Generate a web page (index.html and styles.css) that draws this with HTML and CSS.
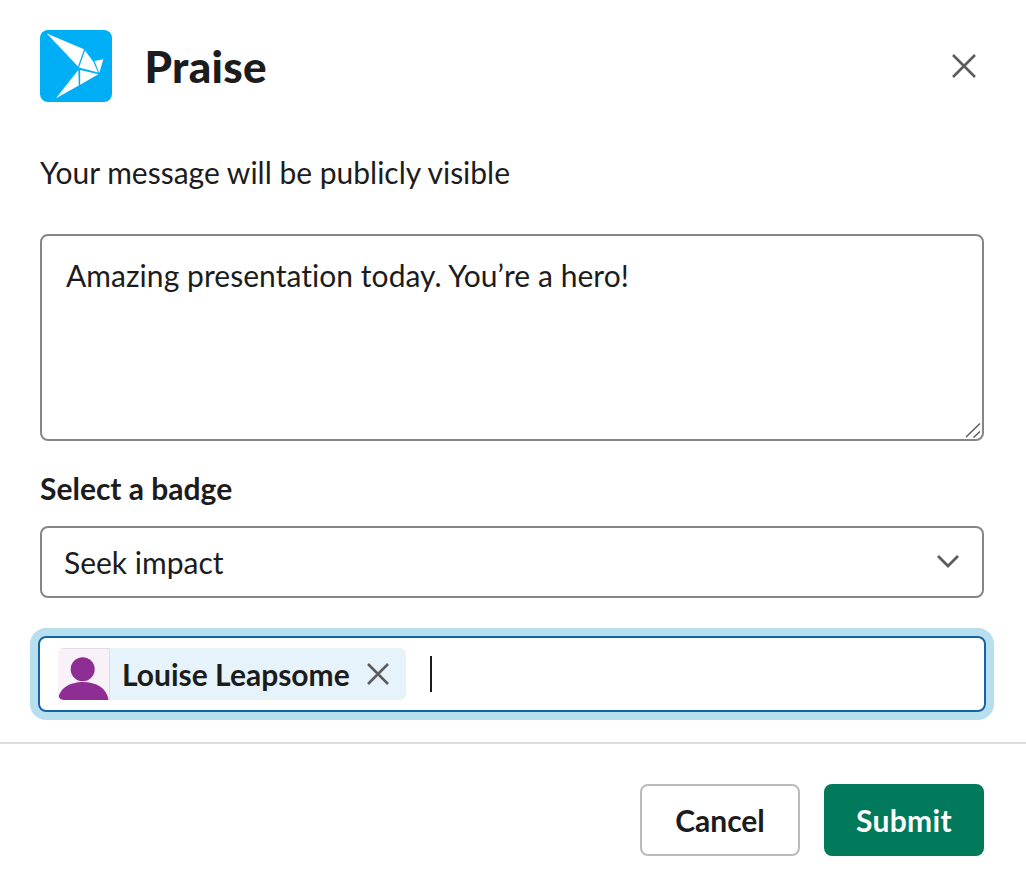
FILE: index.html
```html
<!DOCTYPE html>
<html lang="en">
<head>
<meta charset="utf-8">
<title>Praise</title>
<link rel="stylesheet" href="styles.css">
</head>
<body>
<div class="modal">
  <header class="header">
    <svg class="logo" viewBox="0 0 72 72" aria-hidden="true">
      <rect width="72" height="72" rx="8" fill="#00aef5"/>
      <path fill="#fff" d="M6.800 3.400 L44 19.300 L38 36.500 Z"/>
      <path fill="#fff" d="M45 20.500 L53.500 32 L58 42.500 L39 37.500 Z"/>
      <path fill="#fff" d="M54.500 31 L63.300 29.300 L59.300 43 Z"/>
      <path fill="#fff" d="M38.300 40 L38.800 55.500 L16 68.300 Z"/>
      <path fill="#fff" d="M40.200 40 L58.300 44.300 L40.200 54.800 Z"/>
    </svg>
    <h1 class="title">Praise</h1>
    <svg class="close" viewBox="0 0 28 28" aria-hidden="true">
      <path d="M3 3 L25 25 M25 3 L3 25" fill="none" stroke="#5c5c5c" stroke-width="2.600"/>
    </svg>
  </header>
  <p class="notice">Your message will be publicly visible</p>
  <div class="message-wrap">
    <textarea class="message">Amazing presentation today. You’re a hero!</textarea>
    <svg class="grip" viewBox="0 0 16 16" aria-hidden="true">
      <path d="M1 15 L15 1.500 M8.500 15.500 L15 9.500" fill="none" stroke="#5c5c5c" stroke-width="1.500"/>
    </svg>
  </div>
  <label class="label">Select a badge</label>
  <div class="select">
    <span>Seek impact</span>
    <svg class="chevron" viewBox="0 0 24 14" aria-hidden="true">
      <path d="M2 2 L12 12 L22 2" fill="none" stroke="#5c5c5c" stroke-width="2.800"/>
    </svg>
  </div>
  <div class="people">
    <div class="chip">
      <svg class="avatar" viewBox="0 0 52 52" aria-hidden="true">
        <rect width="52" height="52" fill="#f8f1f8"/>
        <path d="M0 .500 H51.500 V52" fill="none" stroke="#e4dae4"/>
        <circle cx="24.700" cy="21.300" r="12" fill="#8e2d93"/>
        <path d="M0 52 C1 40 12 34 25 34 C38 34 49 40 50.500 52 Z" fill="#8e2d93"/>
      </svg>
      <span class="chip-name">Louise Leapsome</span>
      <svg class="chip-x" viewBox="0 0 24 24" aria-hidden="true">
        <path d="M2 2 L22 22 M22 2 L2 22" fill="none" stroke="#5c5c5c" stroke-width="2.600"/>
      </svg>
    </div>
    <span class="caret"></span>
  </div>
  <footer class="footer">
    <button class="btn btn-cancel">Cancel</button>
    <button class="btn btn-submit">Submit</button>
  </footer>
</div>
</body>
</html>
```
FILE: styles.css
```css
* { box-sizing: border-box; }
html, body { margin: 0; height: 100%; background: #fff; }
body { font-family: Lato, "Liberation Sans", sans-serif; color: #1d1c1d; font-size: 30px; }
.modal { display: flex; flex-direction: column; width: 1026px; height: 886px; padding-top: 30px; }
.header { display: flex; align-items: center; height: 72px; padding: 0 48px 0 40px; }
.logo { width: 72px; height: 72px; flex: none; }
.title { margin: 0 0 0 32.500px; flex: 1; font-size: 44px; font-weight: 900; line-height: 71px; letter-spacing: .3px; }
.close { width: 28px; height: 28px; flex: none; }
.notice { margin: 50px 40px 0; font-size: 30px; line-height: 40px; }
.message-wrap { position: relative; margin: 42px 42px 0 40px; width: 944px; height: 207px; }
.message {
  display: block; width: 100%; height: 100%; padding: 19px 24px;
  border: 2px solid #868686; border-radius: 8px; font: 30px/40px Lato, sans-serif; letter-spacing: .05px; color: #1d1c1d;
  background: #fff; resize: none; outline: none;
}
.grip { position: absolute; right: 3px; bottom: 3px; width: 16px; height: 16px; }
.label { margin: 27px 40px 0; font-weight: 700; line-height: 40px; }
.select {
  display: flex; align-items: center; justify-content: space-between; margin: 18px 42px 0 40px;
  height: 72px; padding: 0 22px 2px 22px; border: 2px solid #868686; border-radius: 8px;
}
.select span { position: relative; top: 1px; }
.chevron { width: 24px; height: 14px; }
.people {
  display: flex; align-items: center; margin: 38px 40px 0 38px; height: 76px; padding: 0 18px;
  border: 2px solid #1264a3; border-radius: 8px; box-shadow: 0 0 0 8px #b8dfee;
}
.chip { display: flex; align-items: center; height: 52px; background: #e6f3fa; border-radius: 6px; overflow: hidden; }
.avatar { width: 52px; height: 52px; flex: none; }
.chip-name { margin-left: 12px; font-weight: 700; line-height: 52px; }
.chip-x { width: 24px; height: 24px; margin: 0 16px 0 16px; }
.caret { width: 2px; height: 36px; margin-left: 24px; background: #1d1c1d; }
.footer {
  display: flex; justify-content: flex-end; gap: 24px; margin-top: 30px; padding: 40px 42px 0 0;
  border-top: 2px solid #dddddd;
}
.btn { width: 160px; height: 72px; padding: 0; border-radius: 8px; font: 700 30px/1 Lato, sans-serif; }
.btn-cancel { background: #fff; color: #1d1c1d; border: 2px solid #bbbbbb; }
.btn-submit { background: #007a5a; color: #fff; border: 0; letter-spacing: .3px; }
```
